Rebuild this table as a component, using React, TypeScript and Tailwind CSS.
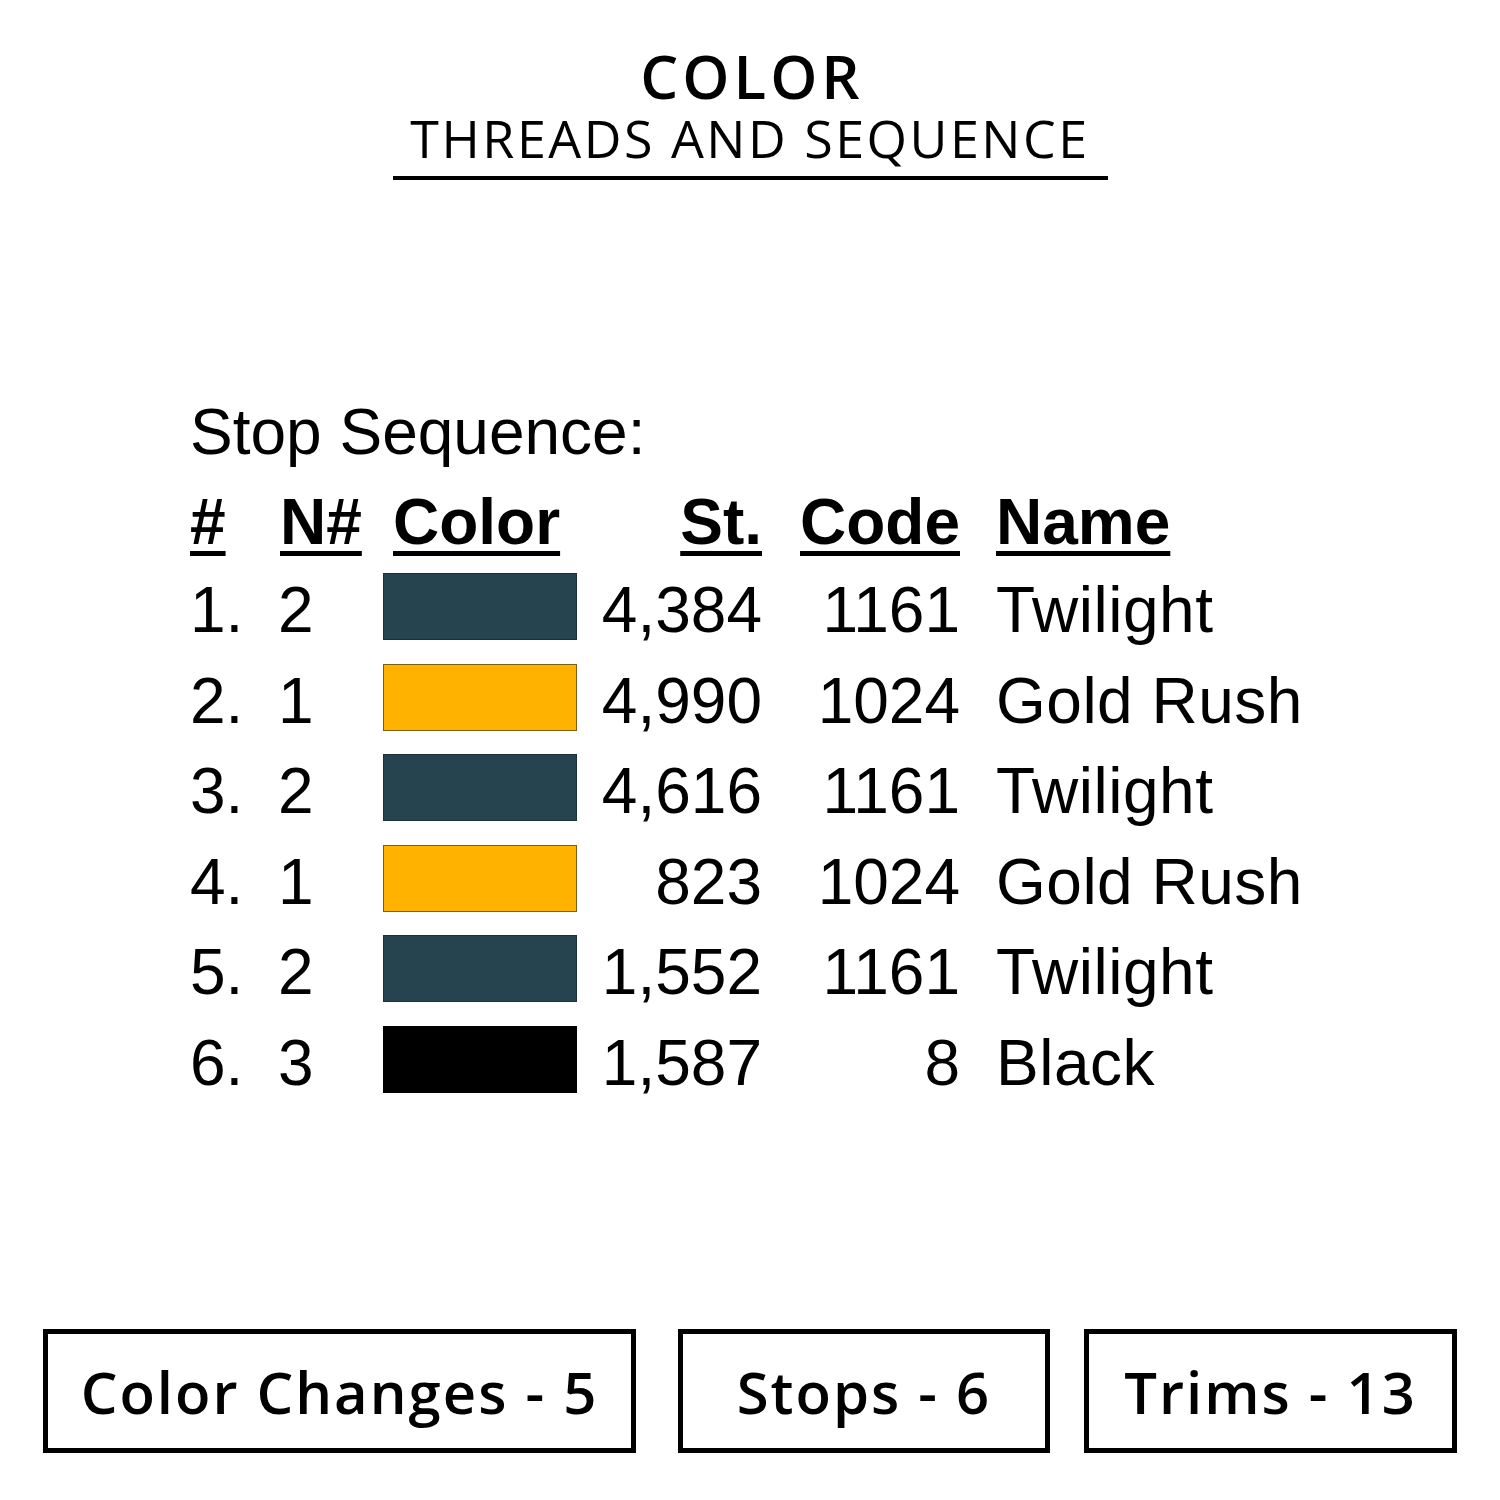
import * as React from 'react'

type Stop = {
  n: number
  color: string
  border: string
  stitches: string
  code: string
  name: string
}

const stops: Stop[] = [
  { n: 2, color: 'bg-[#25444f]', border: 'border-[#1b2f36]', stitches: '4,384', code: '1161', name: 'Twilight' },
  { n: 1, color: 'bg-[#ffb200]', border: 'border-[#7d5c12]', stitches: '4,990', code: '1024', name: 'Gold Rush' },
  { n: 2, color: 'bg-[#25444f]', border: 'border-[#1b2f36]', stitches: '4,616', code: '1161', name: 'Twilight' },
  { n: 1, color: 'bg-[#ffb200]', border: 'border-[#7d5c12]', stitches: '823', code: '1024', name: 'Gold Rush' },
  { n: 2, color: 'bg-[#25444f]', border: 'border-[#1b2f36]', stitches: '1,552', code: '1161', name: 'Twilight' },
  { n: 3, color: 'bg-black', border: 'border-black', stitches: '1,587', code: '8', name: 'Black' },
]

const headCls = 'underline decoration-[5px] underline-offset-[7px]'

const StatBox = ({ label, className }: { label: string; className: string }) => (
  <div
    className={`flex h-[124px] items-center justify-center border-[5px] border-black text-[58px] font-semibold tracking-[2px] text-black ${className}`}
  >
    {label}
  </div>
)

export default function App() {
  return (
    <div className="relative flex h-[1500px] w-[1500px] flex-col bg-white text-black">
      {/* title */}
      <div className="flex flex-col items-center pt-[46px] font-['Open_Sans',sans-serif]">
        <h1 className="pl-[4px] text-[60px] font-semibold leading-none tracking-[4px]">COLOR</h1>
        <div className="mt-[6px] w-[715px] border-b-[4px] border-black pb-[12px] text-center text-[52px] font-normal leading-none tracking-[2.5px]">
          THREADS AND SEQUENCE
        </div>
      </div>

      {/* stop sequence table */}
      <div className="ml-[190px] mt-[212px] font-['Liberation_Sans',Arial,sans-serif]">
        <div className="text-[64px] leading-[80px]">Stop Sequence:</div>

        <div className="mt-[6px] grid grid-cols-[88px_105px_194px_185px_198px_auto] text-[64px]">
          <div className="h-[88px] font-bold leading-[88px]">
            <span className={headCls}>#</span>
          </div>
          <div className="h-[88px] pl-[2px] font-bold leading-[88px]">
            <span className={headCls}>N#</span>
          </div>
          <div className="h-[88px] pl-[10px] font-bold leading-[88px]">
            <span className={headCls}>Color</span>
          </div>
          <div className="h-[88px] text-right font-bold leading-[88px]">
            <span className={headCls}>St.</span>
          </div>
          <div className="h-[88px] text-right font-bold leading-[88px]">
            <span className={headCls}>Code</span>
          </div>
          <div className="h-[88px] pl-[36px] font-bold leading-[88px]">
            <span className={headCls}>Name</span>
          </div>

          {stops.map((s, i) => (
            <React.Fragment key={i}>
              <div className="h-[90.5px] leading-[88px]">{i + 1}.</div>
              <div className="h-[90.5px] leading-[88px]">{s.n}</div>
              <div className="h-[90.5px] pt-[7px]">
                <div className={`h-[67px] w-[194px] border-[1.5px] ${s.color} ${s.border}`} />
              </div>
              <div className="h-[90.5px] text-right leading-[88px]">{s.stitches}</div>
              <div className="h-[90.5px] text-right leading-[88px]">{s.code}</div>
              <div className="h-[90.5px] whitespace-nowrap pl-[36px] leading-[88px] tracking-[0.5px]">{s.name}</div>
            </React.Fragment>
          ))}
        </div>
      </div>

      {/* totals */}
      <div className="absolute left-0 top-[1329px] flex w-full font-['Open_Sans',sans-serif]">
        <StatBox label="Color Changes - 5" className="ml-[43px] w-[593px]" />
        <StatBox label="Stops - 6" className="ml-[42px] w-[372px]" />
        <StatBox label="Trims - 13" className="ml-[34px] w-[373px]" />
      </div>
    </div>
  )
}
